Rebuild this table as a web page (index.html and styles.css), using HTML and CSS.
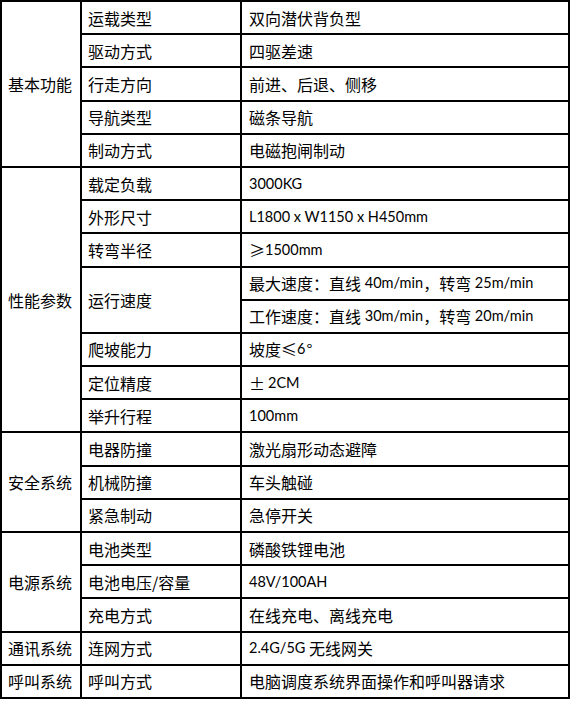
FILE: index.html
```html
<!DOCTYPE html>
<html lang="zh-CN">
<head>
<meta charset="utf-8">
<title>参数表</title>
<link rel="stylesheet" href="styles.css">
</head>
<body>
<div class="spec">
  <div class="cell cat r5">基本功能</div>
  <div class="cell key">运载类型</div><div class="cell val">双向潜伏背负型</div>
  <div class="cell key">驱动方式</div><div class="cell val">四驱差速</div>
  <div class="cell key">行走方向</div><div class="cell val">前进、后退、侧移</div>
  <div class="cell key">导航类型</div><div class="cell val">磁条导航</div>
  <div class="cell key">制动方式</div><div class="cell val">电磁抱闸制动</div>

  <div class="cell cat r8">性能参数</div>
  <div class="cell key">载定负载</div><div class="cell val lat">3000KG</div>
  <div class="cell key">外形尺寸</div><div class="cell val lat">L1800 x W1150 x H450mm</div>
  <div class="cell key">转弯半径</div><div class="cell val lat"><span class="cjk">≥</span>1500mm</div>
  <div class="cell key r2">运行速度</div><div class="cell val lat"><span class="cjk">最大速度：直线</span>&nbsp;40m/min<span class="cjk">，转弯</span>&nbsp;25m/min</div>
  <div class="cell val lat"><span class="cjk">工作速度：直线</span>&nbsp;30m/min<span class="cjk">，转弯</span>&nbsp;20m/min</div>
  <div class="cell key">爬坡能力</div><div class="cell val lat"><span class="cjk">坡度≤</span>6<span class="cjk deg">°</span></div>
  <div class="cell key">定位精度</div><div class="cell val lat"><span class="cjk pm">±</span>2CM</div>
  <div class="cell key">举升行程</div><div class="cell val lat">100mm</div>

  <div class="cell cat r3">安全系统</div>
  <div class="cell key">电器防撞</div><div class="cell val">激光扇形动态避障</div>
  <div class="cell key">机械防撞</div><div class="cell val">车头触碰</div>
  <div class="cell key">紧急制动</div><div class="cell val">急停开关</div>

  <div class="cell cat r3">电源系统</div>
  <div class="cell key">电池类型</div><div class="cell val">磷酸铁锂电池</div>
  <div class="cell key">电池电压/容量</div><div class="cell val lat">48V/100AH</div>
  <div class="cell key">充电方式</div><div class="cell val">在线充电、离线充电</div>

  <div class="cell cat">通讯系统</div>
  <div class="cell key">连网方式</div><div class="cell val lat">2.4G/5G&nbsp;<span class="cjk">无线网关</span></div>

  <div class="cell cat">呼叫系统</div>
  <div class="cell key">呼叫方式</div><div class="cell val">电脑调度系统界面操作和呼叫器请求</div>
</div>
</body>
</html>
```

FILE: styles.css
```css
html, body {
  margin: 0;
  padding: 0;
  background: #fff;
}

.spec {
  box-sizing: border-box;
  width: 570px;
  height: 699px;
  display: grid;
  grid-template-columns: 80px 160px 328px;
  grid-template-rows: repeat(21, 1fr);
  border-top: 2px solid #000;
  border-left: 2px solid #000;
  font-family: "Noto Sans CJK SC", sans-serif;
  font-size: 16px;
  color: #000;
}

.cell {
  box-sizing: border-box;
  display: flex;
  align-items: center;
  border-right: 2px solid #000;
  border-bottom: 2px solid #000;
  line-height: 20px;
  white-space: nowrap;
  min-height: 0;
  overflow: hidden;
}

.cat {
  grid-column: 1;
  padding-left: 6px;
}

.key {
  grid-column: 2;
  padding-left: 6px;
}

.val {
  grid-column: 3;
  padding-left: 7px;
}

.r2 { grid-row: span 2; }
.r3 { grid-row: span 3; }
.r5 { grid-row: span 5; }
.r8 { grid-row: span 8; }

.lat {
  font-family: Lato, "Noto Sans CJK SC", sans-serif;
  font-size: 14.5px;
}

.cjk {
  font-family: "Noto Sans CJK SC", sans-serif;
  font-size: 16px;
}

.pm {
  margin-right: 3px;
}

.deg {
  margin-left: 1px;
}
```
